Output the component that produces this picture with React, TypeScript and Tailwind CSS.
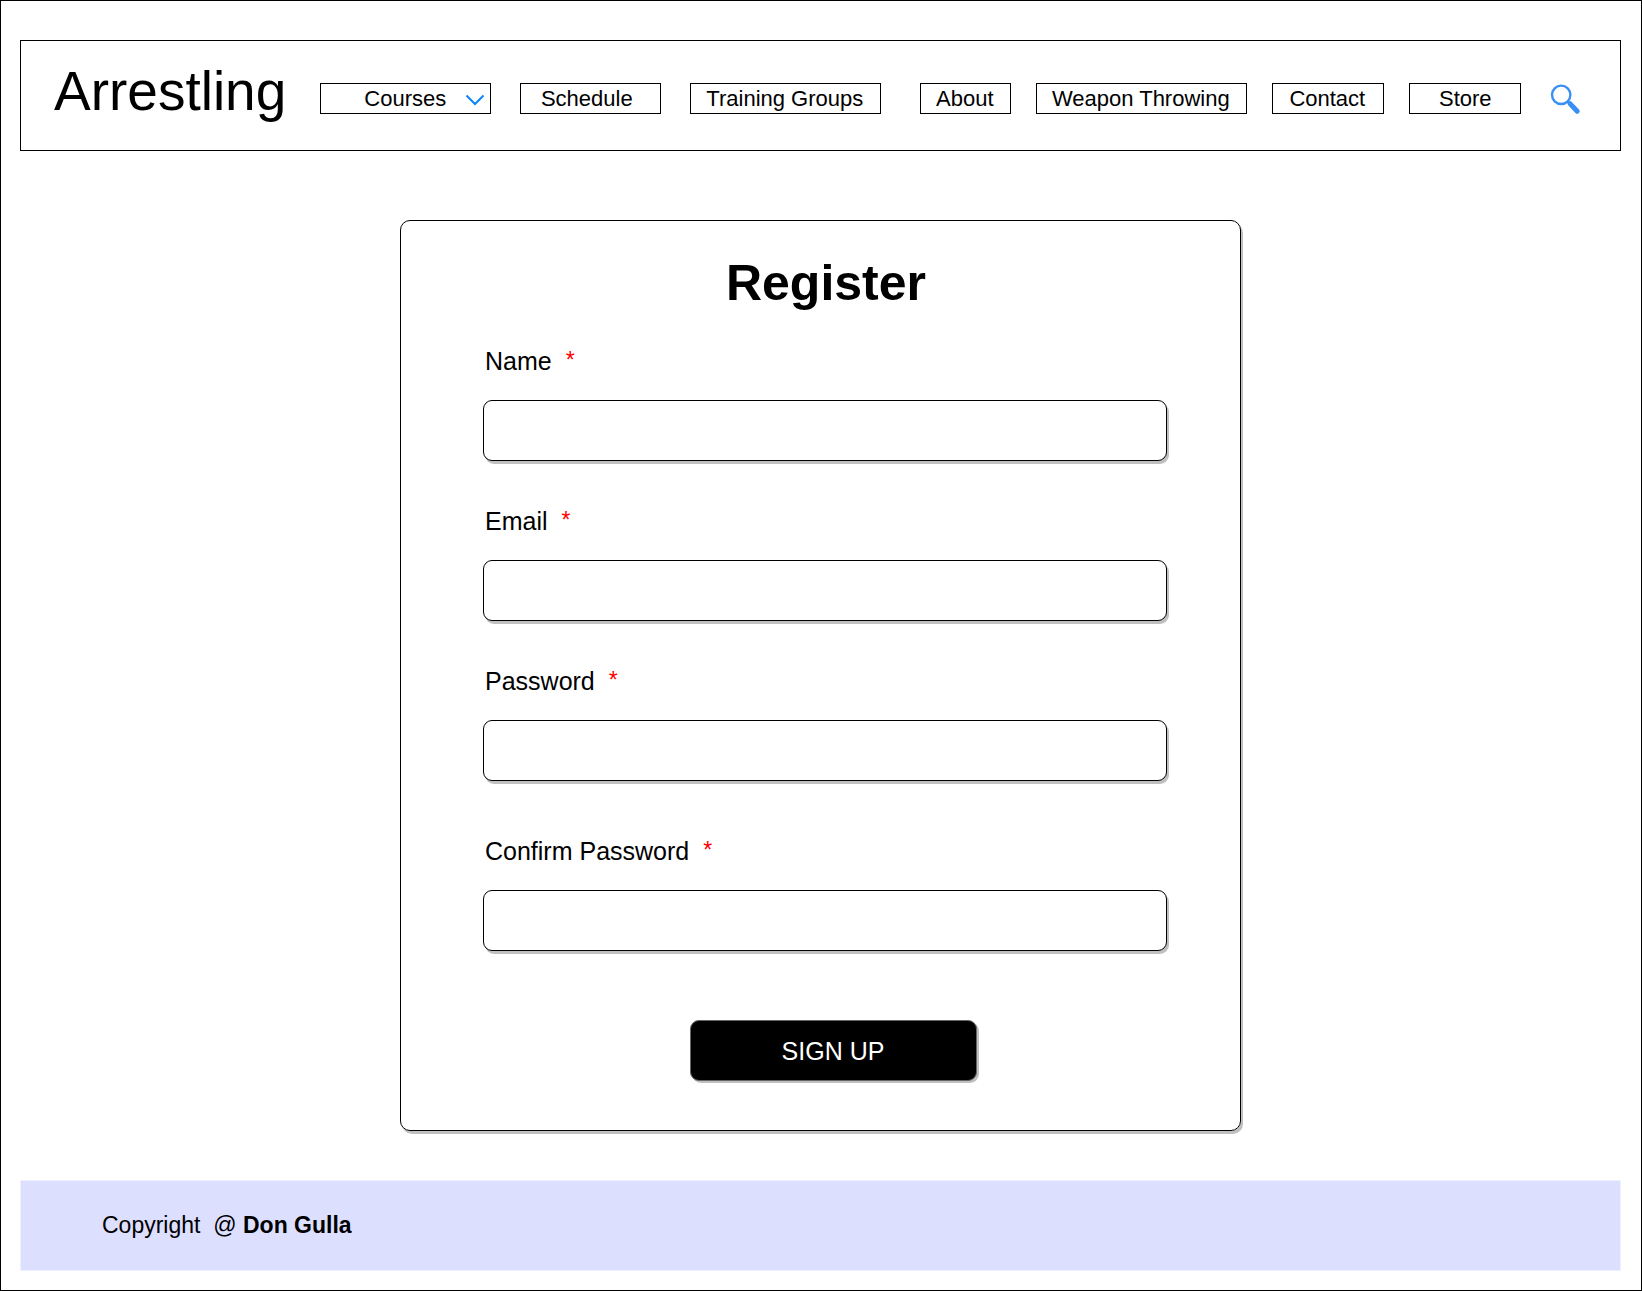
import React from 'react';
import clsx from 'clsx';

type NavLinkProps = { label: string; className: string };

function NavLink({ label, className }: NavLinkProps) {
  return (
    <a
      href="#"
      className={clsx(
        'flex h-[31px] items-center justify-center whitespace-nowrap border border-black text-[22px] leading-7',
        className,
      )}
    >
      {label}
    </a>
  );
}

type FieldProps = { id: string; label: string; type: string; className?: string };

function Field({ id, label, type, className }: FieldProps) {
  return (
    <div className={clsx('flex flex-col', className)}>
      <label htmlFor={id} className="flex gap-3.5 pl-0.5 text-[25px] leading-8">
        {label}
        <span className="text-[23px] leading-[30px] text-[red]">*</span>
      </label>
      <input
        id={id}
        name={id}
        type={type}
        required
        className="mt-[23px] h-[61px] w-full rounded-[9px] border border-black bg-white px-4 text-[25px] shadow-[2px_3px_0_#c0c0c0] outline-none"
      />
    </div>
  );
}

function Header() {
  return (
    <header className="flex items-start border border-black px-[33px] pt-[22px] pb-[31px]">
      <a href="#" className="text-[55px] leading-14">
        Arrestling
      </a>
      <nav className="mt-5 ml-[34px] flex items-center gap-[39px]">
        <div className="flex gap-[29px]">
          <div className="relative">
            <select
              aria-label="Courses"
              className="block h-[31px] w-[171px] appearance-none border border-black bg-white pl-[43px] text-[22px] leading-7 outline-none"
            >
              <option>Courses</option>
            </select>
            <svg
              viewBox="0 0 20 12"
              className="pointer-events-none absolute top-[11px] right-1.5 h-3 w-5"
              fill="none"
              stroke="#0a84ff"
              strokeWidth="2"
              aria-hidden="true"
            >
              <path d="M1.5 1.5 L10 10 L18.5 1.5" />
            </svg>
          </div>
          <NavLink label="Schedule" className="w-[141px] pr-2" />
          <NavLink label="Training Groups" className="w-[191px] pr-0.5" />
        </div>
        <div className="flex gap-[25px]">
          <NavLink label="About" className="w-[91px] pr-0.5" />
          <NavLink label="Weapon Throwing" className="w-[211px] pr-0.5" />
          <NavLink label="Contact" className="w-28 pr-0.5" />
          <NavLink label="Store" className="w-28" />
        </div>
      </nav>
      <button type="button" aria-label="Search" className="mt-5 ml-[29px]">
        <svg viewBox="0 0 32 32" className="h-8 w-8" fill="none" stroke="#3a8ff5" aria-hidden="true">
          <circle cx="11.2" cy="11.8" r="9.2" strokeWidth="2.4" />
          <path d="M17.5 18.3 L20 20.8" strokeWidth="2.6" />
          <path d="M20 20.6 L27.2 28.2" strokeWidth="5" strokeLinecap="round" />
        </svg>
      </button>
    </header>
  );
}

export default function App() {
  return (
    <div className="flex min-h-screen flex-col border border-black bg-white pt-[39px] pr-5 pb-[19px] pl-[19px] font-['Liberation_Sans',Arial,sans-serif] text-black">
      <Header />
      <main className="mt-[69px] mb-[49px]">
        <form
          onSubmit={(e: React.FormEvent) => e.preventDefault()}
          className="mx-auto w-full max-w-[841px] rounded-[10px] border border-black pt-[34px] pr-[73px] pb-[49px] pl-[82px] shadow-[2px_3px_0_#c0c0c0]"
        >
          <h1 className="pl-0.5 text-center text-[50px] leading-14 font-bold">Register</h1>
          <Field id="name" label="Name" type="text" className="mt-[34px]" />
          <Field id="email" label="Email" type="email" className="mt-11" />
          <Field id="password" label="Password" type="password" className="mt-11" />
          <Field id="confirm" label="Confirm Password" type="password" className="mt-[54px]" />
          <div className="mt-[69px] flex justify-center pl-4">
            <button
              type="submit"
              className="h-[61px] w-[287px] rounded-[9px] border border-[#666] bg-black pt-0.5 text-[25px] text-white shadow-[2px_2px_0_#c0c0c0]"
            >
              SIGN UP
            </button>
          </div>
        </form>
      </main>
      <footer className="mt-auto border border-[#eeefff] bg-[#dddfff] px-[81px] pt-7 pb-[29px] text-[23px] leading-8">
        Copyright&nbsp; @ <b>Don Gulla</b>
      </footer>
    </div>
  );
}
